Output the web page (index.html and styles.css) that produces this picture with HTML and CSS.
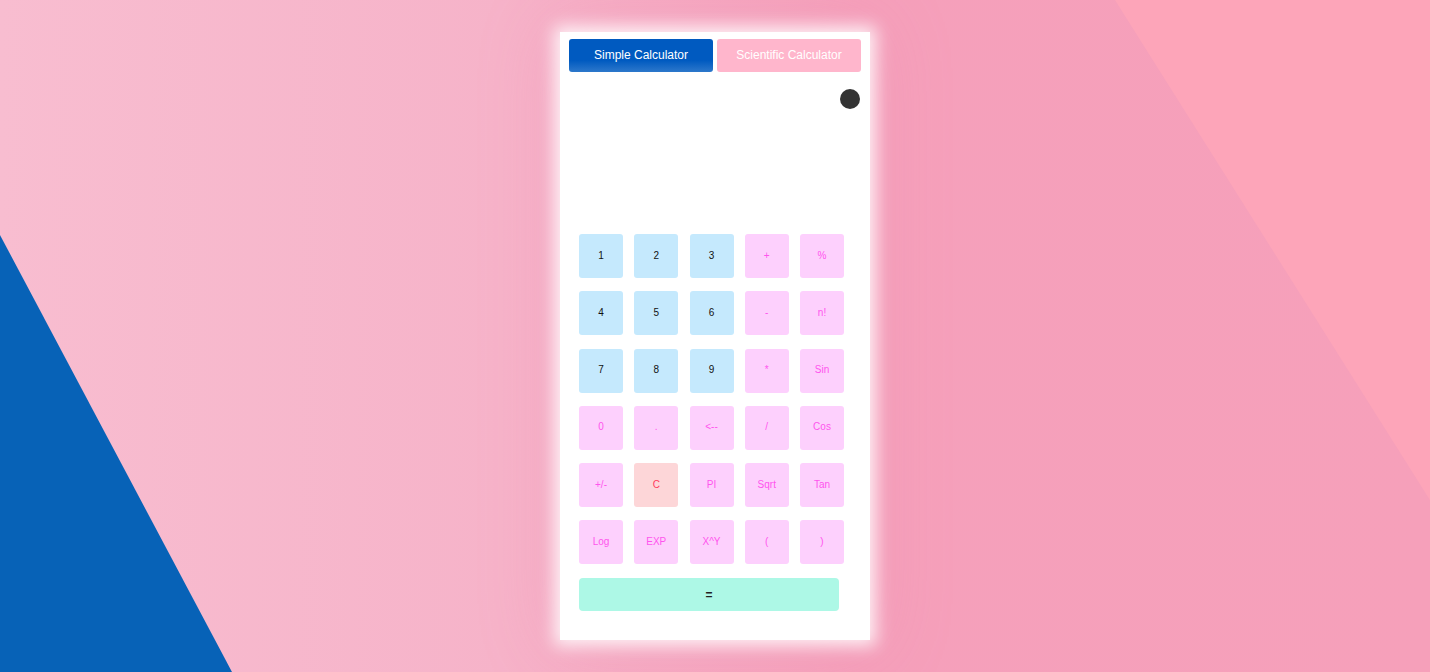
FILE: index.html
```html
<!DOCTYPE html>
<html>
<head>
  <meta charset="UTF-8">
  <title>Calculator</title>
  <link rel="stylesheet" href="styles.css">
</head>
<body>
  <div class="bg-blue"></div>
  <div class="bg-light"></div>

  <div class="calc">
    <div class="tabs">
      <button class="tab active">Simple Calculator</button>
      <button class="tab">Scientific Calculator</button>
    </div>

    <div class="display">
      <span class="dot"></span>
    </div>

    <div class="keys">
      <button class="key num">1</button>
      <button class="key num">2</button>
      <button class="key num">3</button>
      <button class="key op">+</button>
      <button class="key op">%</button>

      <button class="key num">4</button>
      <button class="key num">5</button>
      <button class="key num">6</button>
      <button class="key op">-</button>
      <button class="key op">n!</button>

      <button class="key num">7</button>
      <button class="key num">8</button>
      <button class="key num">9</button>
      <button class="key op">*</button>
      <button class="key op">Sin</button>

      <button class="key op">0</button>
      <button class="key op">.</button>
      <button class="key op">&lt;--</button>
      <button class="key op">/</button>
      <button class="key op">Cos</button>

      <button class="key op">+/-</button>
      <button class="key clear">C</button>
      <button class="key op">PI</button>
      <button class="key op">Sqrt</button>
      <button class="key op">Tan</button>

      <button class="key op">Log</button>
      <button class="key op">EXP</button>
      <button class="key op">X^Y</button>
      <button class="key op">(</button>
      <button class="key op">)</button>
    </div>

    <button class="equals">=</button>
  </div>
</body>
</html>
```

FILE: styles.css
```css
html, body {
  height: 100%;
}

body {
  margin: 0;
  font-family: "Liberation Sans", Arial, sans-serif;
  background: linear-gradient(90deg, #f8bdd0 0%, #f6b3c9 35%, #f5a0bb 60%, #f6a0ba 100%);
  display: flex;
  flex-direction: column;
  align-items: center;
  padding-top: 32px;
  box-sizing: border-box;
  overflow: hidden;
  position: relative;
}

.bg-blue {
  position: absolute;
  inset: 0;
  background: #0762b7;
  clip-path: polygon(0 235px, 232px 672px, 0 672px);
}

.bg-light {
  position: absolute;
  inset: 0;
  background: #fda5b9;
  clip-path: polygon(1115px 0, 1430px 0, 1430px 500px);
}

.calc {
  position: relative;
  width: 310px;
  height: 608px;
  box-sizing: border-box;
  padding: 7px 9px 29px;
  background: #fff;
  box-shadow: 0 0 16px 6px rgba(255, 255, 255, 0.85), 0 0 70px 10px rgba(240, 130, 170, 0.2);
}

.tabs {
  display: flex;
  gap: 4px;
}

.tab {
  width: 144px;
  height: 33px;
  border: none;
  border-radius: 3px;
  font-family: inherit;
  font-size: 12px;
  color: #fff;
  background: #ffb6cc;
  padding: 0 0 2px;
}

.tab.active {
  background: linear-gradient(#005ac0 65%, #2d78cb);
}

.display {
  height: 162px;
  display: flex;
  justify-content: flex-end;
  align-items: flex-start;
  padding-top: 17px;
  box-sizing: border-box;
}

.dot {
  width: 20px;
  height: 20px;
  border-radius: 50%;
  background: #333;
  margin-right: 1px;
}

.keys {
  display: grid;
  grid-template-columns: repeat(5, 44px);
  column-gap: 11.25px;
  row-gap: 13.25px;
  margin-left: 10px;
}

.key {
  width: 44px;
  height: 44px;
  border: none;
  border-radius: 3px;
  padding: 0 0 2px;
  font-family: inherit;
  font-size: 10px;
}

.key.num {
  background: #c5e9fd;
  color: #111;
}

.key.op {
  background: #fdd0fd;
  color: #ff55ee;
}

.key.clear {
  background: #fdd6d8;
  color: #ff3b5c;
}

.equals {
  display: block;
  width: 260px;
  height: 33px;
  margin: 14px 0 0 10px;
  border: none;
  border-radius: 4px;
  background: #adf8e6;
  font-family: inherit;
  font-size: 12px;
  font-weight: bold;
  color: #222;
}
```
